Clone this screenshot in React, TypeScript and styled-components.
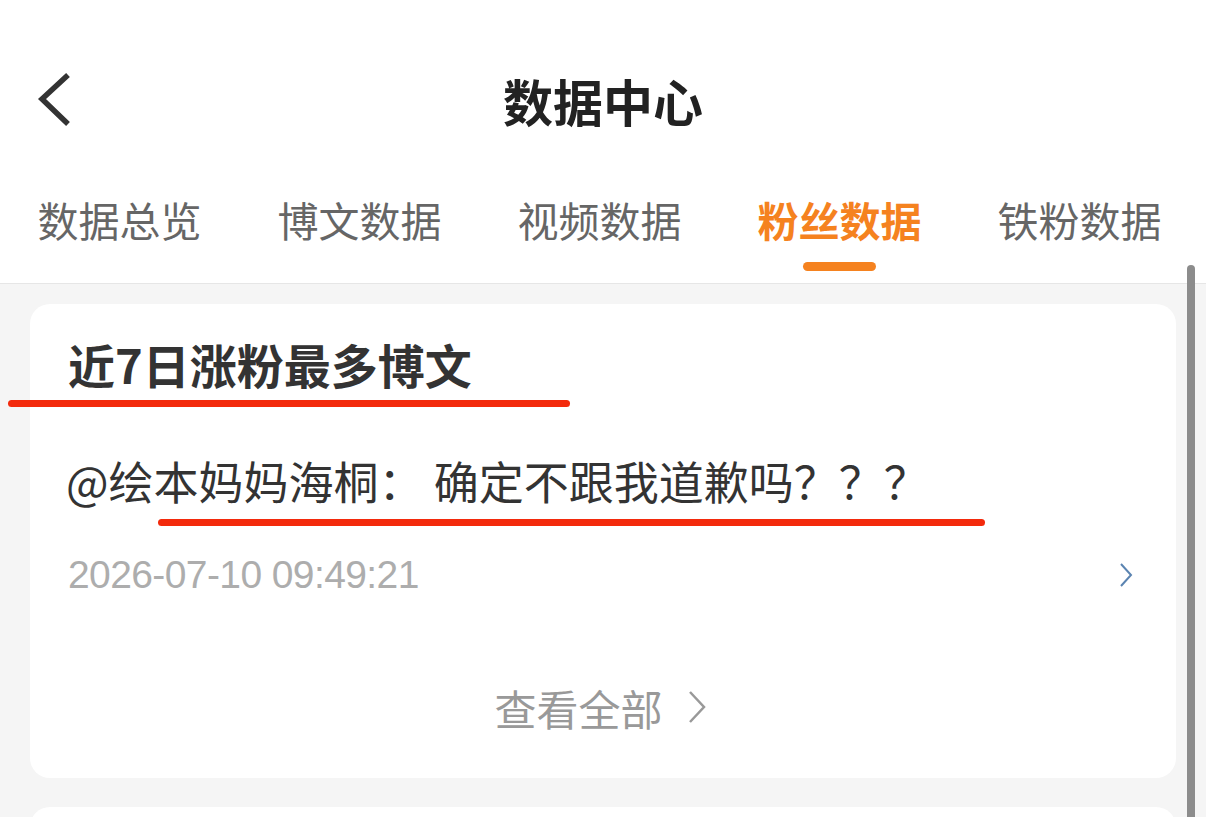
import styled, { createGlobalStyle } from 'styled-components';

const GlobalStyle = createGlobalStyle`
  html, body {
    margin: 0;
    padding: 0;
    background: #f5f5f5;
  }
  body {
    font-family: "Noto Sans CJK SC", "Noto Sans", sans-serif;
  }
  * { box-sizing: border-box; }
`;

const Page = styled.div`
  position: relative;
  width: 1206px;
  height: 817px;
  overflow: hidden;
  background: #f5f5f5;
`;

const Top = styled.header`
  background: #fff;
  border-bottom: 1px solid #e6e6e6;
`;

const NavBar = styled.div`
  height: 160px;
  padding-top: 40px;
  display: grid;
  grid-template-columns: 1fr auto 1fr;
  align-items: center;
`;

const BackButton = styled.button`
  justify-self: start;
  margin-left: 32px;
  width: 44px;
  height: 60px;
  padding: 0;
  border: none;
  background: none;
  display: flex;
  align-items: center;
  justify-content: center;
`;

const Title = styled.h1`
  margin: 0;
  font-size: 50px;
  font-weight: 700;
  color: #222;
  line-height: 60px;
`;

const Tabs = styled.nav`
  height: 123px;
  padding: 36px 0 0 37px;
  display: flex;
  gap: 75px;
`;

const Tab = styled.div`
  display: flex;
  flex-direction: column;
  align-items: center;
  width: 165px;
`;

const TabLabel = styled.span<{ $active?: boolean }>`
  font-size: 41px;
  line-height: 46px;
  white-space: nowrap;
  color: ${(p) => (p.$active ? '#f5821f' : '#666')};
  font-weight: ${(p) => (p.$active ? 700 : 400)};
`;

const Indicator = styled.span`
  margin-top: 20px;
  width: 73px;
  height: 9px;
  border-radius: 5px;
  background: #f5821f;
`;

const Card = styled.section`
  margin: 20px 30px 0;
  background: #fff;
  border-radius: 20px;
  padding: 33px 43px 47px 38px;
`;

const CardTitle = styled.h2`
  margin: 0;
  font-size: 47px;
  line-height: 54px;
  font-weight: 600;
  color: #333;
`;

const PostText = styled.p`
  margin: 64px 0 0 -2px;
  font-size: 45px;
  line-height: 52px;
  color: #333;
  white-space: nowrap;
`;

const DateRow = styled.div`
  margin-top: 46px;
  display: flex;
  align-items: center;
  justify-content: space-between;
  height: 44px;
`;

const DateText = styled.span`
  font-family: "Liberation Sans", Arial, sans-serif;
  font-size: 39px;
  line-height: 44px;
  color: #adadad;
  letter-spacing: -0.6px;
`;

const ViewAll = styled.div`
  margin-top: 86px;
  display: flex;
  align-items: center;
  justify-content: center;
  gap: 24px;
  height: 48px;
  font-size: 42px;
  color: #999;
`;

const NextCard = styled.div`
  margin: 29px 30px 0;
  height: 60px;
  background: #fff;
  border-radius: 20px 20px 0 0;
`;

const Mark = styled.span<{ $left: number; $top: number; $width: number }>`
  position: absolute;
  left: ${(p) => p.$left}px;
  top: ${(p) => p.$top}px;
  width: ${(p) => p.$width}px;
  height: 7px;
  border-radius: 4px;
  background: #f32a0c;
`;

const ScrollBar = styled.span`
  position: absolute;
  left: 1187px;
  top: 265px;
  bottom: 0;
  width: 8px;
  border-radius: 4px 4px 0 0;
  background: #8c8c8c;
`;

const tabs = ['数据总览', '博文数据', '视频数据', '粉丝数据', '铁粉数据'];

export default function App() {
  return (
    <Page>
      <GlobalStyle />
      <Top>
        <NavBar>
          <BackButton aria-label="返回">
            <svg width="36" height="56" viewBox="0 0 36 56">
              <polyline
                points="32,3 6,27 32,52"
                fill="none"
                stroke="#333"
                strokeWidth="5.5"
              />
            </svg>
          </BackButton>
          <Title>数据中心</Title>
          <span />
        </NavBar>
        <Tabs>
          {tabs.map((t) => (
            <Tab key={t}>
              <TabLabel $active={t === '粉丝数据'}>{t}</TabLabel>
              {t === '粉丝数据' && <Indicator />}
            </Tab>
          ))}
        </Tabs>
      </Top>

      <Card>
        <CardTitle>近7日涨粉最多博文</CardTitle>
        <PostText>@绘本妈妈海桐： 确定不跟我道歉吗？？？</PostText>
        <DateRow>
          <DateText>2026-07-10 09:49:21</DateText>
          <svg width="14" height="26" viewBox="0 0 14 26">
            <polyline
              points="2,2 12,13 2,24"
              fill="none"
              stroke="#5b84b1"
              strokeWidth="2"
            />
          </svg>
        </DateRow>
        <ViewAll>
          <span>查看全部</span>
          <svg width="20" height="34" viewBox="0 0 20 34">
            <polyline
              points="3,2 17,17 3,32"
              fill="none"
              stroke="#999"
              strokeWidth="2.5"
            />
          </svg>
        </ViewAll>
      </Card>
      <NextCard />

      <Mark $left={8} $top={400} $width={562} />
      <Mark $left={158} $top={519} $width={827} />
      <ScrollBar />
    </Page>
  );
}
